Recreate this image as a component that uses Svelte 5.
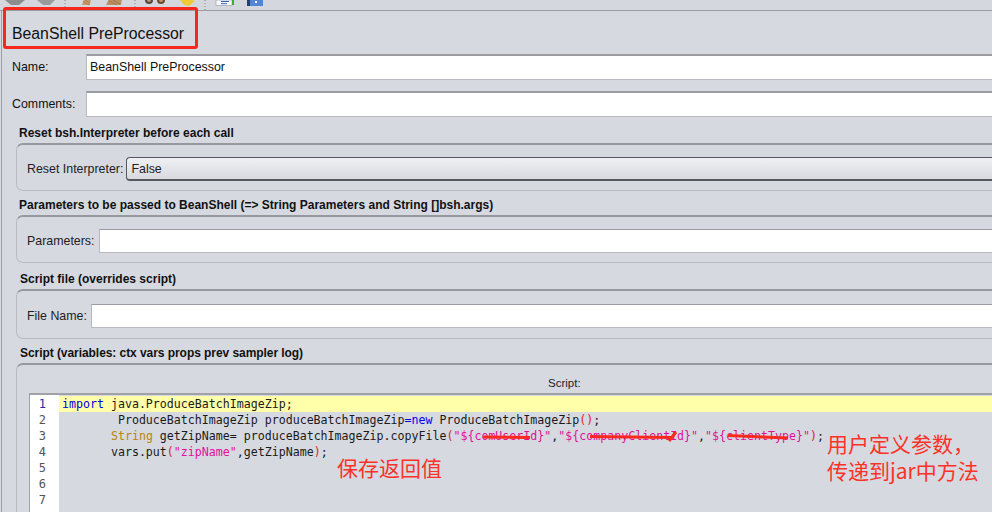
<script>
  const fields = [
    { label: 'Name:', value: 'BeanShell PreProcessor' },
    { label: 'Comments:', value: '' }
  ];
  const indent7 = '       ';
  const indent8 = '        ';
</script>

<div class="page">
  <div class="toolbar">
    <svg class="tools" width="280" height="10" viewBox="0 0 280 10">
      <path d="M7 -4h14l4 4-6 5h-8l-6-5z" fill="#8d8d8d"/>
      <path d="M40 -4h11l4 4-5 5h-7l-6-5z" fill="#9a9a9a"/>
      <path d="M82 5l2-6h7l-1 6z" fill="#c49a6c"/>
      <path d="M83 1l6 4M85 0l5 3" stroke="#9c7444" stroke-width=".6"/>
      <path d="M106 5l3-6h13l-1 6z" fill="#b98f63"/>
      <path d="M109 1l8 4M113 0l7 4" stroke="#8e6a3e" stroke-width=".6"/>
      <circle cx="149" cy="0" r="4" fill="#5a4632"/><circle cx="149" cy="0" r="2" fill="#b09a80"/>
      <circle cx="161" cy="0" r="4" fill="#6b4a2c"/><circle cx="161" cy="0" r="2" fill="#c09468"/>
      <path d="M180 0h12l3 1-6 5-5-1z" fill="#f0c935"/>
      <rect x="216" y="0" width="16" height="5.500" fill="#f6f8fb" stroke="#8f99a8" stroke-width=".6"/>
      <path d="M221 1.500h8M221 3.700h6" stroke="#3560b5"/>
      <rect x="232" y="0" width="2" height="5" fill="#45a545"/>
      <rect x="247" y="-2" width="16" height="8" fill="#4f86d6"/><rect x="247" y="-2" width="3" height="8" fill="#24406f"/>
      <rect x="255" y="1" width="2" height="2" fill="#fff"/>
      <path d="M65 0v10M135 0v10M205 0v10" stroke="#888" stroke-dasharray="1 2"/>
    </svg>
  </div>

  <div class="body">
    <h1>BeanShell PreProcessor</h1>

    {#each fields as f}
      <div class="field">
        <span class="flabel">{f.label}</span>
        <div class="input">{f.value}</div>
      </div>
    {/each}

    <section class="s1">
      <h2>Reset bsh.Interpreter before each call</h2>
      <div class="group">
        <span>Reset Interpreter:</span>
        <div class="select">False</div>
      </div>
    </section>

    <section class="s2">
      <h2>Parameters to be passed to BeanShell (=&gt; String Parameters and String []bsh.args)</h2>
      <div class="group">
        <span>Parameters:</span>
        <div class="ginput"></div>
      </div>
    </section>

    <section class="s3">
      <h2>Script file (overrides script)</h2>
      <div class="group">
        <span>File Name:</span>
        <div class="ginput"></div>
      </div>
    </section>

    <section class="s4">
      <h2>Script (variables: ctx vars props prev sampler log)</h2>
      <div class="group script">
        <div class="caption">Script:</div>
        <div class="editor">
          <div class="gutter">
            <b>1</b><i>2</i><i>3</i><i>4</i><i>5</i><i>6</i><i>7</i>
          </div>
          <div class="code">
            <div class="line cur"><span class="kw">import</span> java.ProduceBatchImageZip;</div>
            <div class="line">{indent8}ProduceBatchImageZip produceBatchImageZip<span class="kw">=new</span> ProduceBatchImageZip<span class="p">()</span>;</div>
            <div class="line">{indent7}<span class="ty">String</span> getZipName= produceBatchImageZip.copyFile<span class="p">(</span><span class="st">"$&#123;comUserId&#125;"</span>,<span class="st">"$&#123;companyClientId&#125;"</span>,<span class="st">"$&#123;clientType&#125;"</span><span class="p">)</span>;</div>
            <div class="line">{indent7}vars.put<span class="p">(</span><span class="st">"zipName"</span>,getZipName<span class="p">)</span>;</div>
          </div>
        </div>
      </div>
    </section>
  </div>

  <div class="redbox"></div>
  <svg class="strikes" width="992" height="512" viewBox="0 0 992 512">
    <path d="M483 437L530 437.500M590 436.500L672 437.500M669 441L676 432M728 435.500L788 438" stroke="#fa2a1e" stroke-width="3" fill="none"/>
  </svg>
  <div class="note n1">保存返回值</div>
  <div class="note n2">用户定义参数，<br />传递到jar中方法</div>
</div>

<style>
  :global(body) { margin: 0; background: #d6d9e0; overflow: hidden; }
  .page {
    position: relative; width: 992px; height: 512px; overflow: hidden;
    background: #d6d9e0; color: #111;
    font: 12.4px "Liberation Sans", Arial, sans-serif;
  }
  .toolbar { height: 10px; background: #d4d7de; border-bottom: 1px solid #9a9ca3; }
  .tools { display: block; }
  .body { margin-left: 1px; border-left: 1px solid #9da0a6; padding-left: 10px; height: 501px; }
  h1 { margin: 0; height: 43px; padding-top: 13px; box-sizing: border-box; font: 400 15.800px/19px "Liberation Sans", Arial, sans-serif; }
  .field { display: flex; align-items: center; height: 26px; margin-bottom: 11px; }
  .flabel { width: 74px; flex: none; }
  .input {
    flex: 1; height: 26px; box-sizing: border-box; background: #fff; padding: 0 3px; line-height: 23px;
    border: 1px solid #b8bac0; border-top: 2px solid #9a9ca2; margin-right: -2px;
  }
  section { margin: 0 -2px 0 4px; }
  h2 { margin: 0; font: 700 12px/14px "Liberation Sans", Arial, sans-serif; padding-left: 3px; height: 17px; }
  .s1 { margin-top: -2px; }
  .s2 { margin-top: 7px; }
  .s3 { margin-top: 9px; }
  .s4 { margin-top: 7px; }
  .s3 h2, .s4 h2 { padding-left: 4px; }
  .s4 h2 { letter-spacing: -0.06px; }
  .group {
    display: flex; align-items: center; gap: 4px; box-sizing: border-box; height: 48px;
    padding: 3px 0 0 10px; margin-right: -4px;
    border: 1px solid #b9bbc1; border-top: 2px solid #96989e; border-right: 0;
    border-radius: 7px 0 0 7px;
    color: #222;
  }
  .s3 .group { height: 50px; }
  .select {
    flex: 1; height: 24px; box-sizing: border-box; padding-left: 4px; line-height: 22px; margin-left: -1px;
    border: 1px solid #55585f; border-right: 0; border-bottom-width: 2px; border-radius: 4px 0 0 4px;
    background: linear-gradient(#eff0f3, #d8dae0);
  }
  .ginput { flex: 1; height: 24px; background: #fff; border: 1px solid #b8bac0; border-right: 0; border-top-color: #9a9ca2; box-sizing: border-box; }
  .s2 .ginput { margin-left: 1px; }
  .script { display: block; height: 160px; padding: 0 0 0 12px; border-bottom: 0; border-radius: 7px 0 0 0; }
  .caption { height: 28px; line-height: 36px; font-size: 11.5px; padding-left: 519px; }
  .editor { display: flex; height: 130px; border-top: 2px solid #a0a2a8; border-left: 1px solid #a0a2a8; }
  .gutter { width: 29px; flex: none; background: #fff; padding-top: 1px; box-sizing: border-box; }
  .gutter b, .gutter i {
    display: block; height: 16px; text-align: right; padding-right: 13px;
    font: normal 12px/16px "DejaVu Sans Mono", monospace; color: #555;
  }
  .gutter b { color: #1d2fa8; }
  .code { flex: 1; padding-top: 1px; font: 11.62px/16px "DejaVu Sans Mono", monospace; color: #1a1a1a; min-width: 0; }
  .line { height: 16px; padding-left: 3px; white-space: pre; }
  .cur { background: #ffffaa; }
  .kw { color: #0000e6; }
  .ty { color: #b8860b; }
  .st { color: #e0109a; }
  .p { color: #e02020; }
  .redbox {
    position: absolute; left: 3px; top: 7px; width: 189px; height: 36px;
    border: 3px solid #f5281c; border-radius: 3px;
  }
  .strikes { position: absolute; left: 0; top: 0; pointer-events: none; }
  .note { position: absolute; color: #fb3228; font: 21px/27px "Noto Sans CJK SC", sans-serif; white-space: nowrap; }
  .n1 { left: 337px; top: 454px; }
  .n2 { left: 827px; top: 430px; }
</style>
